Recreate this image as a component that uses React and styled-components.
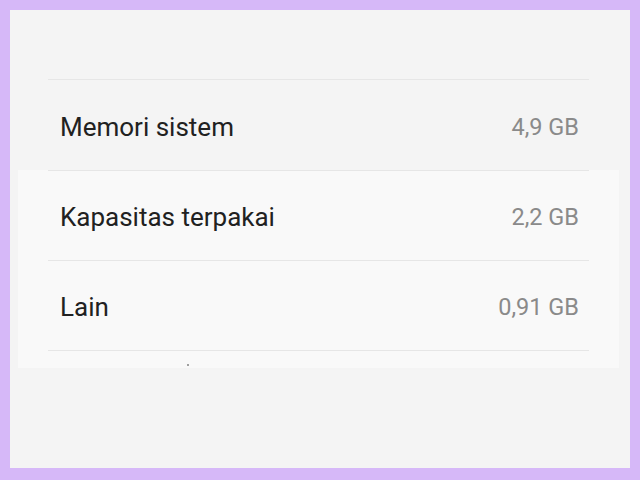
import React from "react";
import styled, { createGlobalStyle } from "styled-components";

const Global = createGlobalStyle`
  html, body { margin: 0; padding: 0; }
  body { background: #d6b8f8; font-family: Roboto, "Noto Sans", sans-serif; }
`;

const Outer = styled.div`
  width: 640px;
  height: 480px;
  box-sizing: border-box;
  padding: 10px 10px 12px 10px;
  background: #d6b8f8;
`;

const Frame = styled.div`
  height: 100%;
  background: #f4f4f4;
  padding-top: 69px;
  box-sizing: border-box;
  display: flex;
  flex-direction: column;
`;

const Section = styled.div`
  padding: 0 41px 0 38px;
`;

const Panel = styled.div`
  position: relative;
  margin: 0 11px 0 8px;
  background: #f9f9f9;
  padding: 0 30px 17px 30px;
`;

const Row = styled.div`
  height: ${(p) => p.$h || 90}px;
  box-sizing: border-box;
  border-top: 1px solid #e6e6e6;
  display: flex;
  align-items: center;
  justify-content: space-between;
  padding: 3px 10px 0 12px;
  ${(p) => p.$last && "border-bottom: 1px solid #e6e6e6;"}
`;

const Label = styled.span`
  font-size: 26px;
  color: #212121;
`;

const Value = styled.span`
  font-size: 23.5px;
  color: #8a8a8a;
`;

const Speck = styled.span`
  position: absolute;
  left: 169px;
  bottom: 2px;
  width: 2px;
  height: 2px;
  background: #a0a0a0;
`;

export default function App() {
  return (
    <Outer>
      <Global />
      <Frame>
        <Section>
          <Row $h={91}>
            <Label>Memori sistem</Label>
            <Value>4,9 GB</Value>
          </Row>
        </Section>
        <Panel>
          <Row>
            <Label>Kapasitas terpakai</Label>
            <Value>2,2 GB</Value>
          </Row>
          <Row $last $h={91}>
            <Label>Lain</Label>
            <Value>0,91 GB</Value>
          </Row>
          <Speck />
        </Panel>
      </Frame>
    </Outer>
  );
}
